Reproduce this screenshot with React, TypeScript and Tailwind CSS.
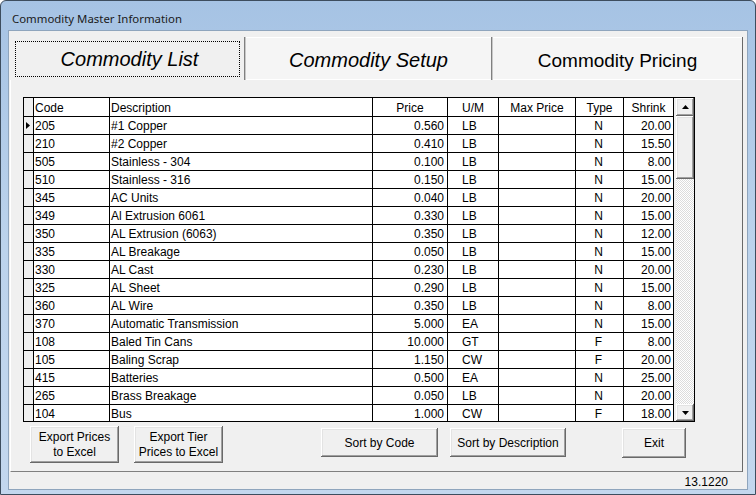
import React from "react";

type Row = [string, string, string, string, string, string];

const rows: Row[] = [
  ["205", "#1 Copper", "0.560", "LB", "N", "20.00"],
  ["210", "#2 Copper", "0.410", "LB", "N", "15.50"],
  ["505", "Stainless - 304", "0.100", "LB", "N", "8.00"],
  ["510", "Stainless - 316", "0.150", "LB", "N", "15.00"],
  ["345", "AC Units", "0.040", "LB", "N", "20.00"],
  ["349", "Al Extrusion 6061", "0.330", "LB", "N", "15.00"],
  ["350", "AL Extrusion (6063)", "0.350", "LB", "N", "12.00"],
  ["335", "AL Breakage", "0.050", "LB", "N", "15.00"],
  ["330", "AL Cast", "0.230", "LB", "N", "20.00"],
  ["325", "AL Sheet", "0.290", "LB", "N", "15.00"],
  ["360", "AL Wire", "0.350", "LB", "N", "8.00"],
  ["370", "Automatic Transmission", "5.000", "EA", "N", "15.00"],
  ["108", "Baled Tin Cans", "10.000", "GT", "F", "8.00"],
  ["105", "Baling Scrap", "1.150", "CW", "F", "20.00"],
  ["415", "Batteries", "0.500", "EA", "N", "25.00"],
  ["265", "Brass Breakage", "0.050", "LB", "N", "20.00"],
  ["104", "Bus", "1.000", "CW", "F", "18.00"],
];

const cols = "grid grid-cols-[10px_76px_263px_75px_51px_77px_48px_50px]";
const cell = "border-r border-b border-black bg-white whitespace-nowrap overflow-hidden";
const raised =
  "bg-[#f0f0f0] shadow-[inset_-1px_-1px_#696969,inset_1px_1px_#ffffff,inset_-2px_-2px_#a0a0a0,inset_2px_2px_#e3e3e3]";

function Btn({ children, className }: { children: React.ReactNode; className: string }) {
  return (
    <button
      type="button"
      className={`${raised} flex items-center justify-center text-center text-[12px] leading-[15px] text-black ${className}`}
    >
      {children}
    </button>
  );
}

function Arrow({ up }: { up?: boolean }) {
  return (
    <svg width="7" height="4" viewBox="0 0 7 4">
      <path d={up ? "M0 4 L3.5 0 L7 4 Z" : "M0 0 L3.5 4 L7 0 Z"} fill="#000" />
    </svg>
  );
}

export default function App() {
  return (
    <div
      className="w-[756px] h-[495px] flex flex-col rounded-t-[6px] border border-[#3d4d5e] bg-gradient-to-b from-[#a6c3e4] via-[#bcd3ec] to-[#c3d7ee] text-black"
      style={{ fontFamily: '"Liberation Sans", Arial, sans-serif' }}
    >
      <div
        className="h-[29px] shrink-0 pl-[11px] pt-[10px] text-[11.4px] leading-[16px] text-[#1a1a1a]"
        style={{ fontFamily: '"Noto Sans", "Open Sans", sans-serif' }}
      >
        Commodity Master Information
      </div>

      <div className="flex-1 flex px-[7px] pb-[7px]">
        <div className="flex-1 flex flex-col bg-[#f0f0f0] border border-[#8fa5bd] pl-[1px] pt-[6px]">
          <div className="w-[733px] h-[435px] flex flex-col border-r border-[#696969]">
            {/* tab strip */}
            <div className="h-[43px] flex shrink-0">
              <div className="w-[234px] pl-[5px] pt-[4px] pr-[4px]">
                <div className="h-[36px] border border-dotted border-black flex items-center justify-center pb-[1px] pl-[4px] italic text-[20px] leading-[24px]">
                  Commodity List
                </div>
              </div>
              <div className="w-[2px] bg-[#808080] border-r border-[#c8c8c8]" />
              <div className="w-[245px] bg-[#f5f5f5] border-t border-b border-white flex items-center justify-center pt-[2px] italic text-[20px] leading-[24px]">
                Commodity Setup
              </div>
              <div className="w-[2px] bg-[#808080] border-r border-[#c8c8c8]" />
              <div className="flex-1 bg-[#f5f5f5] border-t border-b border-white flex items-center justify-center pt-[5px] text-[19px] leading-[24px]">
                Commodity Pricing
              </div>
            </div>

            {/* panel */}
            <div className="flex-1 flex flex-col border-l border-white border-b border-b-[#808080] pl-[12px] pt-[17px]">
              <div className="w-[672px] h-[325px] border border-black flex overflow-hidden text-[12px] leading-[18px]">
                <div className="w-[650px] flex flex-col">
                  <div className={`${cols} h-[19px] shrink-0`}>
                    <div className="border-r border-b border-black bg-[#f0f0f0]" />
                    <div className={`${cell} pl-[1px] leading-[20px]`}>Code</div>
                    <div className={`${cell} pl-[1px] leading-[20px]`}>Description</div>
                    <div className={`${cell} text-center leading-[20px]`}>Price</div>
                    <div className={`${cell} text-center leading-[20px]`}>U/M</div>
                    <div className={`${cell} text-center leading-[20px]`}>Max Price</div>
                    <div className={`${cell} text-center leading-[20px]`}>Type</div>
                    <div className={`${cell} text-center leading-[20px]`}>Shrink</div>
                  </div>
                  {rows.map((r, i) => (
                    <div key={i} className={`${cols} h-[18px] shrink-0`}>
                      <div className="border-r border-b border-black bg-[#f0f0f0] flex items-center pl-[2px]">
                        {i === 0 && (
                          <svg width="4" height="7" viewBox="0 0 4 7">
                            <path d="M0 0 L4 3.5 L0 7 Z" fill="#000" />
                          </svg>
                        )}
                      </div>
                      <div className={`${cell} pl-[1px]`}>{r[0]}</div>
                      <div className={`${cell} pl-[1px]`}>{r[1]}</div>
                      <div className={`${cell} text-right pr-[3px]`}>{r[2]}</div>
                      <div className={`${cell} pl-[14px]`}>{r[3]}</div>
                      <div className={cell} />
                      <div className={`${cell} text-center pr-[2px]`}>{r[4]}</div>
                      <div className={`${cell} text-right pr-[2px]`}>{r[5]}</div>
                    </div>
                  ))}
                </div>
                {/* scrollbar */}
                <div className="w-[20px] flex flex-col pl-[2px] bg-[#f0f0f0]">
                  <div className={`${raised} h-[18px] flex items-center justify-center shrink-0`}>
                    <Arrow up />
                  </div>
                  <div className={`${raised} h-[63px] shrink-0`} />
                  <div className="flex-1 bg-[repeating-conic-gradient(#dcdcdc_0_25%,#ffffff_0_50%)] bg-[length:2px_2px]" />
                  <div className={`${raised} h-[17px] flex items-center justify-center shrink-0`}>
                    <Arrow />
                  </div>
                </div>
              </div>

              <div className="flex items-start mt-[4px] pl-[7px]">
                <Btn className="w-[89px] h-[37px]">
                  Export Prices
                  <br />
                  to Excel
                </Btn>
                <Btn className="w-[89px] h-[37px] ml-[15px]">
                  Export Tier
                  <br />
                  Prices to Excel
                </Btn>
                <Btn className="w-[117px] h-[29px] mt-[2px] ml-[98px] pt-[1px]">Sort by Code</Btn>
                <Btn className="w-[116px] h-[29px] mt-[2px] ml-[12px] pt-[1px]">Sort by Description</Btn>
                <Btn className="w-[64px] h-[30px] mt-[2px] ml-[56px] pt-[1px]">Exit</Btn>
              </div>
            </div>
          </div>
          <div className="flex justify-end pr-[19px] pt-[3px] text-[12px] leading-[14px]">13.1220</div>
        </div>
      </div>
    </div>
  );
}
